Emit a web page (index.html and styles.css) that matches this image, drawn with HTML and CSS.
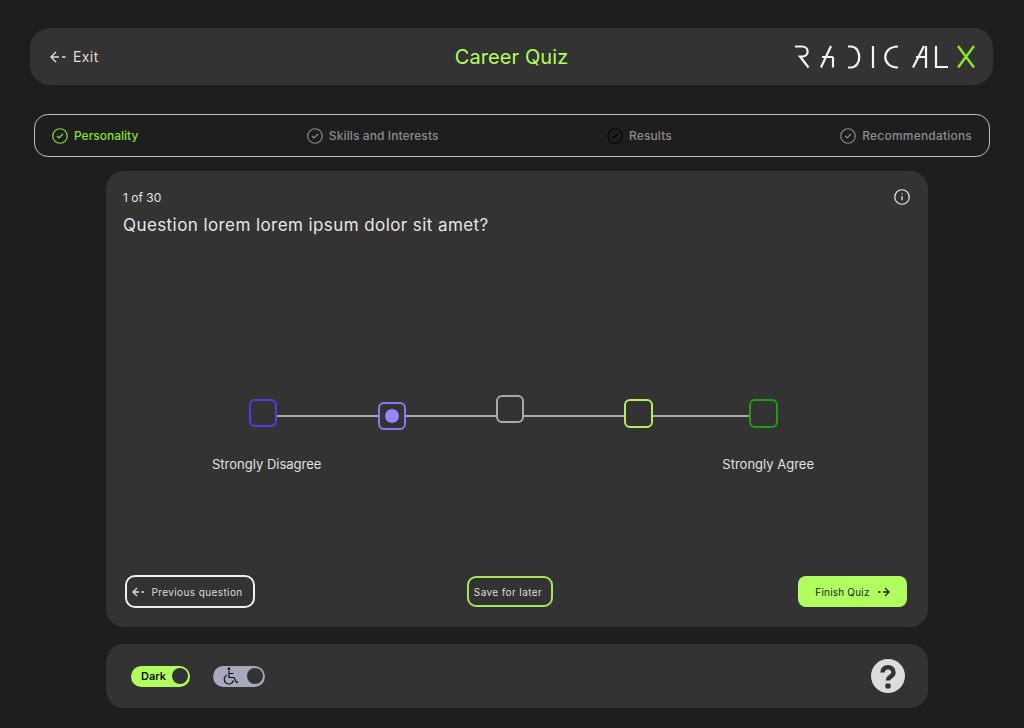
FILE: index.html
```html
<!DOCTYPE html>
<html lang="en">
  <head>
    <meta charset="UTF-8" />
    <title>RadicalX | Career Quiz</title>
    <link rel="stylesheet" href="styles.css">
  </head>
  <body>
    <header class="topbar">
      <a class="exit">
        <svg class="arrow" width="16" height="12" viewBox="0 0 16 12"><path d="M6 1 1 6l5 5M1 6h8M12 6h3.500"/></svg>
        <span>Exit</span>
      </a>
      <h1 class="title">Career Quiz</h1>
      <svg class="logo" width="182" height="28" viewBox="0 0 182 28" role="img" aria-label="RadicalX">
        <g class="logo-white">
          <path d="M1 3.500H8C15.500 3.500 15.500 13.500 8 13.500H6L14.500 24.500"/>
          <path d="M37 3 27 24.500M28 14H39M39 14V24.500"/>
          <path d="M54 3.500h3c11 0 11 21 0 21h-3"/>
          <path d="M79 3V25"/>
          <path d="M104 3.500c-17 0-17 21 0 21"/>
          <path d="M130 3 119 24.500M122 14H132M132 3V25"/>
          <path d="M142 3V24H154"/>
        </g>
        <path class="logo-green" d="M164 3l16 21.500M180 3l-16 21.500"/>
      </svg>
    </header>

    <nav class="steps">
      <div class="step step-active">
        <svg class="check" width="16" height="16" viewBox="0 0 16 16"><circle cx="8" cy="8" r="7.250"/><path d="m5 8 2 2 4-4"/></svg>
        <span>Personality</span>
      </div>
      <div class="step">
        <svg class="check" width="16" height="16" viewBox="0 0 16 16"><circle cx="8" cy="8" r="7.250"/><path d="m5 8 2 2 4-4"/></svg>
        <span>Skills and Interests</span>
      </div>
      <div class="step step-dark">
        <svg class="check" width="16" height="16" viewBox="0 0 16 16"><circle cx="8" cy="8" r="7.250"/><path d="m5 8 2 2 4-4"/></svg>
        <span>Results</span>
      </div>
      <div class="step step-last">
        <svg class="check" width="16" height="16" viewBox="0 0 16 16"><circle cx="8" cy="8" r="7.250"/><path d="m5 8 2 2 4-4"/></svg>
        <span>Recommendations</span>
      </div>
    </nav>

    <main class="card">
      <div class="card-head">
        <span class="count">1 of 30</span>
        <svg class="info" width="16" height="16" viewBox="0 0 16 16"><circle cx="8" cy="8" r="7.250"/><path d="M8 7.200v4M8 4.400v1.200"/></svg>
      </div>
      <p class="question">Question lorem lorem ipsum dolor sit amet?</p>

      <div class="scale">
        <span class="box box-1"></span>
        <span class="line line-1"></span>
        <span class="box box-2"><i class="dot"></i></span>
        <span class="line line-2"></span>
        <span class="box box-3"></span>
        <span class="line line-3"></span>
        <span class="box box-4"></span>
        <span class="line line-4"></span>
        <span class="box box-5"></span>
      </div>
      <div class="scale-labels">
        <span>Strongly Disagree</span>
        <span>Strongly Agree</span>
      </div>

      <div class="actions">
        <button class="btn btn-prev">
          <svg class="arrow" width="13" height="10" viewBox="0 0 13 10"><path d="M5 1 1 5l4 4M1 5h6M9.500 5H12"/></svg>
          Previous question
        </button>
        <button class="btn btn-save">Save for later</button>
        <button class="btn btn-finish">
          Finish Quiz
          <svg class="arrow" width="13" height="10" viewBox="0 0 13 10"><path d="M8 1l4 4-4 4M12 5H6M3.500 5H1"/></svg>
        </button>
      </div>
    </main>

    <footer class="bottombar">
      <div class="toggle toggle-dark">
        <span>Dark</span>
        <i class="knob"></i>
      </div>
      <div class="toggle toggle-access">
        <svg width="18" height="18" viewBox="0 0 18 18"><circle cx="7" cy="1.800" r="1.300" class="fill"/><path d="M7 3.500v7h5l2.500 5 1.500-.6M7 6.500h4.500"/><path d="M5 8a4.700 4.700 0 1 0 6.500 5.500"/></svg>
        <i class="knob"></i>
      </div>
      <svg class="help" width="34" height="34" viewBox="0 0 34 34">
        <circle cx="17" cy="17" r="17" class="help-bg"/>
        <path d="M11.500 13.500c0-7 11-7 11 0 0 4-5.500 4-5.500 8"/>
        <circle cx="17" cy="27" r="2.800" class="help-dot"/>
      </svg>
    </footer>
  </body>
</html>
```

FILE: styles.css
```css
* {
  margin: 0;
  padding: 0;
  box-sizing: border-box;
}
body {
  width: 1024px;
  height: 728px;
  overflow: hidden;
  background: #1e1e1e;
  color: #e6e6e6;
  font-family: "Inter", "Liberation Sans", sans-serif;
  padding-top: 28px;
}
svg {
  display: block;
  fill: none;
  stroke: currentColor;
}

/* top bar */
.topbar {
  height: 57px;
  margin: 0 31px 0 30px;
  padding: 0 17px 0 20px;
  background: #333;
  border-radius: 20px;
  display: flex;
  align-items: center;
  justify-content: space-between;
  position: relative;
}
.exit {
  display: flex;
  align-items: center;
  gap: 7px;
  font-size: 14px;
  letter-spacing: 0.4px;
  color: #ddd;
}
.arrow {
  stroke-width: 1.400;
}
.title {
  position: absolute;
  left: 0;
  right: 0;
  text-align: center;
  font-size: 20px;
  font-weight: 400;
  letter-spacing: 0.1px;
  color: #b0ff5e;
}
.logo {
  stroke-width: 2.200;
}
.logo-white {
  stroke: #f4f4f4;
}
.logo-green {
  stroke: #8be82a;
  stroke-width: 2.400;
}

/* steps */
.steps {
  height: 43px;
  margin: 29px 34px 14px 34px;
  padding: 0 17px;
  border: 1px solid #bdbdbd;
  border-radius: 14px;
  display: flex;
  align-items: center;
  justify-content: space-between;
}
.step {
  display: flex;
  align-items: center;
  gap: 6px;
  font-size: 12px;
  font-weight: 500;
  letter-spacing: 0.1px;
  color: #8b8b8f;
}
.check {
  stroke-width: 1.200;
}
.step-active {
  color: #84e12a;
  letter-spacing: 0;
}
.step-dark .check {
  color: #050505;
}
.step-last {
  letter-spacing: 0.2px;
}

/* question card */
.card {
  height: 456px;
  margin: 0 96px 17px 106px;
  padding: 18px 18px 19px 17px;
  background: #333;
  border-radius: 18px;
  display: flex;
  flex-direction: column;
}
.card-head {
  display: flex;
  align-items: center;
  justify-content: space-between;
  height: 16px;
}
.count {
  font-size: 12px;
  color: #e6e6e6;
}
.info {
  stroke-width: 1.200;
  color: #eee;
}
.question {
  margin-top: 8px;
  font-size: 17px;
  line-height: 24px;
  letter-spacing: 0.42px;
  color: #e6e6e6;
}
.scale {
  margin: 158px 0 0 126px;
  display: flex;
  align-items: flex-start;
  height: 36px;
}
.box {
  width: 28px;
  height: 28px;
  border-radius: 6px;
  border: 2px solid #aaa;
  flex: none;
  display: flex;
  align-items: center;
  justify-content: center;
}
.box-1 {
  margin-top: 4px;
  border-color: #4d3fe0;
}
.box-2 {
  margin-top: 7px;
  border-color: #8a78f0;
}
.box-3 {
  border-color: #aaa;
}
.box-4 {
  width: 29px;
  height: 29px;
  margin-top: 4px;
  border-color: #b0f060;
}
.box-5 {
  width: 29px;
  height: 29px;
  margin-top: 4px;
  border-color: #1f9e0a;
}
.dot {
  width: 14px;
  height: 14px;
  border-radius: 50%;
  background: #9685ff;
}
.line {
  height: 2px;
  margin-top: 20px;
  background: #a8a8a8;
  flex: none;
}
.line-1 {
  width: 101px;
}
.line-2 {
  width: 90px;
}
.line-3 {
  width: 100px;
}
.line-4 {
  width: 96px;
}
.scale-labels {
  margin: 24px 96px 0 89px;
  display: flex;
  justify-content: space-between;
  font-size: 13px;
  line-height: 18px;
  color: #e0e0e0;
}
.actions {
  margin: auto 3px 0 0;
  padding-left: 2px;
  display: flex;
  align-items: center;
}
.btn {
  height: 31px;
  font-family: inherit;
  font-size: 10px;
  letter-spacing: 0.4px;
  background: none;
  color: #ddd;
  display: flex;
  align-items: center;
  justify-content: center;
  gap: 6px;
  border: 2px solid;
  border-radius: 9px;
}
.btn-prev {
  width: 130px;
  height: 33px;
  padding-right: 5px;
  border-color: #efefef;
  border-radius: 10px;
}
.btn-save {
  width: 86px;
  margin-left: 212px;
  padding-right: 4px;
  border-color: #a3e65a;
}
.btn-finish {
  width: 109px;
  margin-left: auto;
  border: none;
  border-radius: 8px;
  background: #b0ff5e;
  color: #222;
  gap: 7px;
  letter-spacing: 0.2px;
}

/* bottom bar */
.bottombar {
  height: 64px;
  margin: 0 96px 0 106px;
  padding: 0 23px 0 25px;
  background: #333;
  border-radius: 18px;
  display: flex;
  align-items: center;
}
.toggle {
  height: 21px;
  border-radius: 11px;
  display: flex;
  align-items: center;
  justify-content: space-between;
  padding: 0 2px 0 10px;
  color: #111;
}
.toggle-dark {
  width: 59px;
  background: #b0ff5e;
  font-size: 11px;
  font-weight: 600;
}
.toggle-access {
  width: 52px;
  margin-left: 23px;
  background: #a6a8bb;
  padding-left: 9px;
}
.toggle-access svg {
  stroke-width: 1.200;
}
.toggle-access .fill {
  fill: #111;
  stroke: none;
}
.knob {
  width: 16px;
  height: 16px;
  border-radius: 50%;
  background: #333;
}
.help {
  margin-left: auto;
  color: #333;
  stroke-width: 4.500;
}
.help-bg {
  fill: #dcdcdc;
  stroke: none;
}
.help-dot {
  fill: #333;
  stroke: none;
}
```
